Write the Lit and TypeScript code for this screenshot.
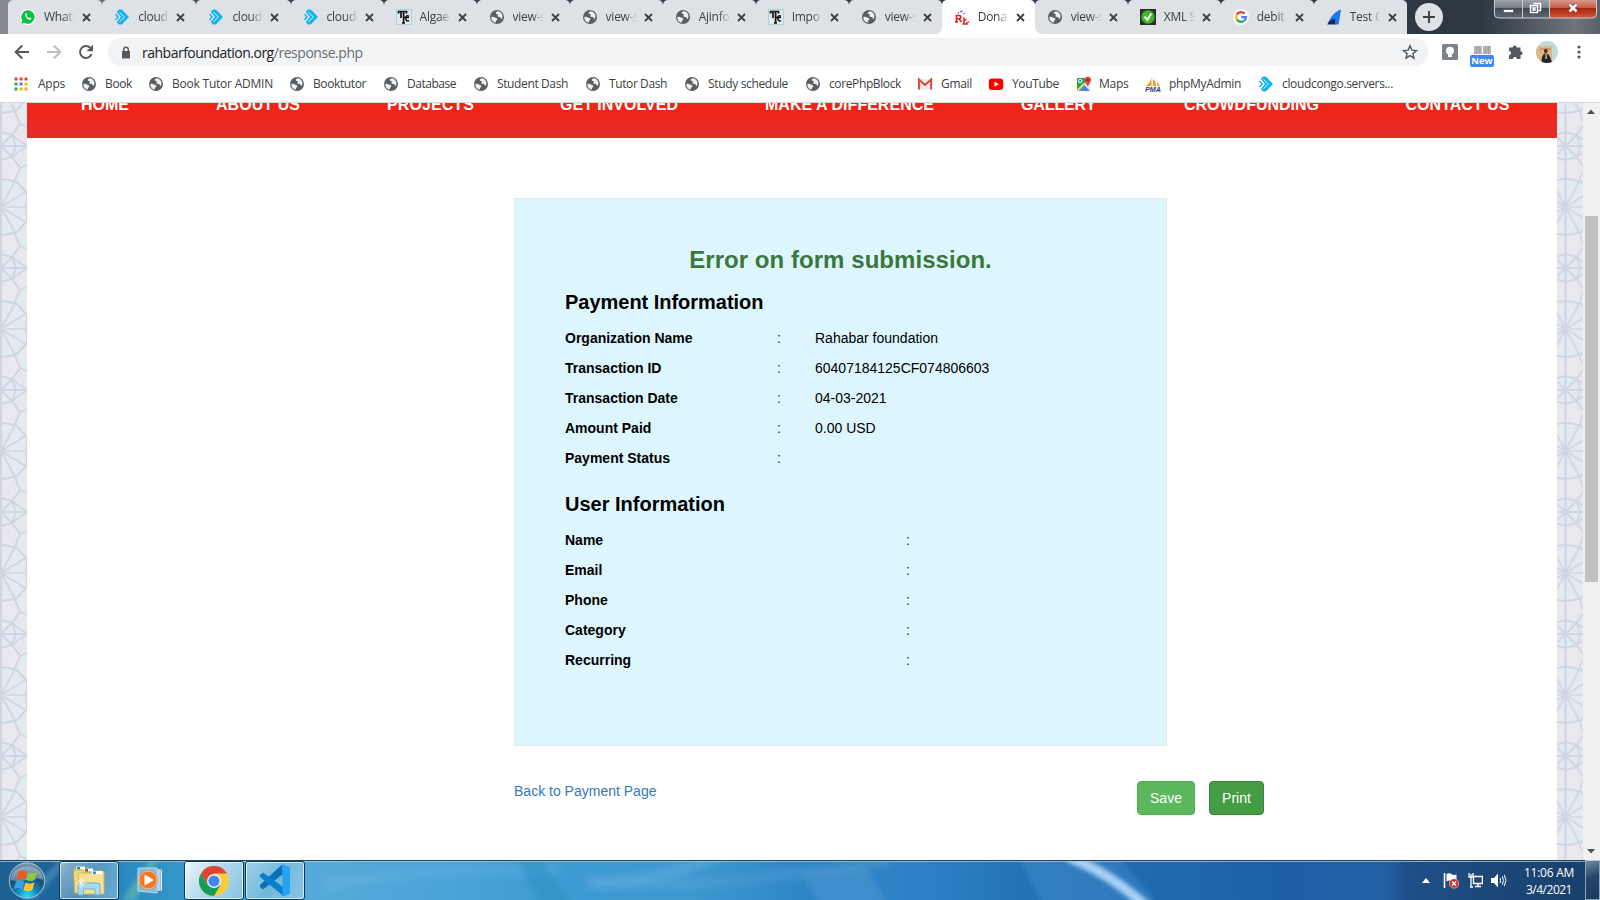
import { LitElement, html, css, svg, nothing } from "lit";
import { customElement, property } from "lit/decorators.js";

/* Text that is tracked so that it fills a given width. */
@customElement("fit-text")
class FitText extends LitElement {
  @property({ type: Number }) width = 0;
  @property() text = "";
  static styles = css`
    :host { display: inline-block; white-space: pre; }
    .t { display: inline-block; white-space: pre; }
  `;
  render() {
    return html`<span class="t">${this.text}</span>`;
  }
  updated() {
    const el = this.renderRoot.querySelector(".t") as HTMLElement;
    el.style.letterSpacing = "0px";
    const natural = el.getBoundingClientRect().width;
    if (this.width && natural) {
      el.style.letterSpacing = `${((this.width - natural) / this.text.length).toFixed(3)}px`;
    }
  }
}

const icons: Record<string, unknown> = {
  globe: svg`<circle cx="8" cy="8" r="7" fill="#5b5f64"/><path d="M2.300 8.200c1.200-.9 2.600-.2 3.500.4.900.6 2.300.3 2.500 1.500.2 1-1.300 1.400-1.500 2.400l-.3 1.300C4.200 13.200 2.300 11 2.300 8.200zM8.500 2.300c-.9.500-2 1-1.700 2 .3.900 1.700.4 2 1.300.2.800-.8 1.300-.3 2 .6.800 2 .1 2.900.8.600.5.500 1.400 1.300 1.500C14.800 6.500 12.500 2.600 8.500 2.300z" fill="#eef0f2"/>`,
  whatsapp: svg`<circle cx="8" cy="8" r="8" fill="#fff"/><path d="M8 1.300a6.700 6.700 0 0 0-5.700 10.200L1.400 14.700l3.200-.9A6.700 6.700 0 1 0 8 1.300z" fill="#0cc143"/><path d="M5.600 4.600c.6-.5 1-.2 1.200.4l.4 1c.1.400-.5.8-.5 1 .5 1 1.200 1.700 2.200 2.100.3 0 .6-.8 1-.7l1.400.7c.4.200 0 1.200-.6 1.500C8.500 11.600 4.200 8 5.600 4.600z" fill="#fff"/>`,
  kite: svg`<path d="M5 .5h2.800L15 8l-7.200 7.500H5L2.800 13 7 8 2.800 3z" fill="#10b5ef"/><path d="M5.500 3.200 10.300 8l-4.800 4.800" fill="none" stroke="#dff6ff" stroke-width="1"/><path d="M2.500 5 5 8 2.500 11 .8 11 3 8 .8 5z" fill="#10b5ef"/>`,
  tc: svg`<rect x=".5" y=".5" width="15" height="15" fill="#e4e8ec" stroke="#a9d3da"/><path d="M2.500 4.500V2.500h8v2M5 3v6M7.600 3v11M6 14h3M8 8.500h5" stroke="#111" stroke-width="1.700" fill="none"/><path d="M13 7.300q-3.200-1.500-3.200 2t3.400 2.300" stroke="#111" stroke-width="1.500" fill="none"/>`,
  rlf: svg`<path d="M4 5c1-3 3-3 4-1M7 1.500l2 1.500M9 5l2-1" stroke="#7a86c8" stroke-width="1.300" fill="none" stroke-dasharray="2 1"/><path d="M2.500 13V6.500h2.500c2.500 0 2.500 3.200 0 3.200H3m2 0 2.500 3.300M1 13h3M10 8.500V15M8.500 15h4.500v-2M10 11h2.500" stroke="#e6211d" stroke-width="1.600" fill="none"/><circle cx="14.500" cy="13" r=".8" fill="#e6211d"/>`,
  check: svg`<rect width="16" height="16" fill="#2b2f2b"/><circle cx="8" cy="8" r="6.700" fill="#44b52a"/><path d="M4.600 7.500 7.300 11l4-6.500" stroke="#fff" stroke-width="2" fill="none"/>`,
  google: svg`<circle cx="8" cy="8" r="8" fill="#fff"/><g fill="none" stroke-width="2.300"><path d="M11.600 4.600A4.900 4.900 0 0 0 3.700 5.800" stroke="#ea4335"/><path d="M3.700 5.800a4.900 4.900 0 0 0 0 4.400" stroke="#fbbc05"/><path d="M3.700 10.200a4.900 4.900 0 0 0 7.500 1.500" stroke="#34a853"/><path d="M11.200 11.700A4.900 4.900 0 0 0 12.900 8.200H8.200" stroke="#4285f4"/></g>`,
  sail: svg`<path d="M15 .5 12.500 15.500H9.500V11C7 10.500 4 12 1.500 15 4.500 8 9 2 15 .5z" fill="#1b76ea"/><path d="M1.200 15.500C3.500 11.500 6.500 9.500 9.500 10.500v5z" fill="#0d2b5c"/>`,
  apps: svg`${[1.500, 6.500, 11.500].map((y, r) => [1.500, 6.500, 11.500].map((x, c) => svg`<rect x=${x} y=${y} width="3" height="3" fill=${[["#ea4335", "#ea4335", "#ea4335"], ["#34a853", "#4285f4", "#fbbc05"], ["#34a853", "#fbaf05", "#fbaf05"]][r][c]}/>`))}`,
  gmail: svg`<path d="M1 3h14v10.500H1z" fill="#ececec"/><path d="M1.900 13.500V3.500L8 8.900l6.100-5.400v10" stroke="#d9483b" stroke-width="2" fill="none"/>`,
  youtube: svg`<rect x=".8" y="2.500" width="14.400" height="11.500" rx="3" fill="#f00"/><path d="M6.500 5.600v5.200L10.700 8.200z" fill="#fff"/>`,
  maps: svg`<path d="M1 2h13v13H1z" fill="#1fa463"/><path d="M1 15 14 2v13z" fill="#e8e8e6"/><path d="M1.500 15 7.800 8.500 14 15z" fill="#4a86f0"/><path d="m1 13.500 7-7L9.500 8 2.500 15H1z" fill="#fcd24a"/><circle cx="4.200" cy="5" r="1.700" fill="none" stroke="#fff"/><path d="M11.700 11C11.500 8.500 8.600 7 8.600 4a3.200 3.200 0 0 1 6.400 0c0 3-2.900 4.500-3.300 7z" fill="#e3423a"/><circle cx="11.800" cy="4" r="1.100" fill="#7c1a14"/>`,
  pma: svg`<path d="M6.500 1v9H.8C4 7.500 6 5 6.500 1zM8 3v7h3C11 6.500 10 4.500 8 3zM11.500 1c0 4 1.500 7 4 9h-3z" fill="#f29c2e"/><text x="0" y="15.800" font-size="7" font-weight="bold" font-style="italic" font-family="Liberation Sans" fill="#3b3b6d" textLength="16" lengthAdjust="spacingAndGlyphs">PMA</text>`,
};
const icon = (name: string) => html`<svg class="ico" viewBox="0 0 16 16">${icons[name]}</svg>`;

const tabs: [string, string][] = [
  ["whatsapp", "Whats"], ["kite", "cloudc"], ["kite", "cloudc"], ["kite", "cloudc"], ["tc", "Algae"],
  ["globe", "view-s"], ["globe", "view-s"], ["globe", "Ajinfo"], ["tc", "Impo"], ["globe", "view-s"],
  ["rlf", "Donat"], ["globe", "view-s"], ["check", "XML S"], ["google", "debit"], ["sail", "Test C"],
];

/* icon, label, left edge of the icon, left edge of the label, label width */
const marks: [string, string, number, number, number][] = [
  ["apps", "Apps", 13, 38, 27], ["globe", "Book", 81, 105, 27], ["globe", "Book Tutor ADMIN", 148, 172, 101],
  ["globe", "Booktutor", 289, 313, 53], ["globe", "Database", 383, 407, 49], ["globe", "Student Dash", 473, 497, 71],
  ["globe", "Tutor Dash", 585, 609, 58], ["globe", "Study schedule", 684, 708, 80], ["globe", "corePhpBlock", 805, 829, 72],
  ["gmail", "Gmail", 917, 941, 31], ["youtube", "YouTube", 988, 1012, 47], ["maps", "Maps", 1076, 1099, 29.500],
  ["pma", "phpMyAdmin", 1145, 1169, 72], ["kite", "cloudcongo.servers...", 1258, 1282, 111],
];

const nav: [string, number, number][] = [
  ["HOME", 81, 48], ["ABOUT US", 216, 84], ["PROJECTS", 387, 87], ["GET INVOLVED", 560, 118],
  ["MAKE A DIFFERENCE", 765, 169], ["GALLERY", 1021, 75], ["CROWDFUNDING", 1184, 135], ["CONTACT US", 1405.500, 104],
];

const payment: [string, string][] = [
  ["Organization Name", "Rahabar foundation"], ["Transaction ID", "60407184125CF074806603"],
  ["Transaction Date", "04-03-2021"], ["Amount Paid", "0.00 USD"], ["Payment Status", ""],
];
const user = ["Name", "Email", "Phone", "Category", "Recurring"];

const quarter = svg`
  <path d="M0 14 11 11 19 22 14 34 0 32z" fill="#e9e9ef"/>
  <path d="M19 22 28 19V6L20 4 11 11z" fill="#e7e7ee"/>
  <g fill="#d2e6e4"><rect x="3" y="17" width="1" height="1"/><rect x="7" y="19" width="1" height="1"/><rect x="11" y="17" width="1" height="1"/><rect x="4" y="23" width="1" height="1"/><rect x="9" y="24" width="1" height="1"/><rect x="14" y="22" width="1" height="1"/><rect x="6" y="28" width="1" height="1"/><rect x="12" y="29" width="1" height="1"/><rect x="19" y="9" width="1" height="1"/><rect x="23" y="12" width="1" height="1"/><rect x="20" y="16" width="1" height="1"/><rect x="21" y="33" width="1" height="1"/><rect x="24" y="28" width="1" height="1"/></g>
  <g fill="#f1dde1"><rect x="5" y="20" width="1" height="1"/><rect x="10" y="21" width="1" height="1"/><rect x="2" y="27" width="1" height="1"/><rect x="9" y="28" width="1" height="1"/><rect x="14" y="26" width="1" height="1"/><rect x="17" y="12" width="1" height="1"/><rect x="22" y="15" width="1" height="1"/><rect x="24" y="9" width="1" height="1"/><rect x="20" y="28" width="1" height="1"/></g>
  <path d="M0 14 11 11 19 22 14 34M11 11 15 0M0 0 11 11M11 11 20 4 28 0M19 22 28 18M14 34 28 49M0 61 14 35M0 61 26 45" fill="none" stroke="#d1d5e2" stroke-width="1.900"/>
  <path d="M0 33Q8 33 15 36 M26 45Q26 53 25 61" fill="none" stroke="#d1d5e2" stroke-width="2"/>
  <path d="M0 0H28" stroke="#d1d5e2" stroke-width="2"/>
  <path d="M0 61H28" stroke="#d9d6e4" stroke-width="1.600"/>
`;
const strip = (id: string, axis: number) => html`
  <svg class="strip" width="100%" height="757">
    <defs><pattern id=${id} width="56" height="122" patternUnits="userSpaceOnUse" x=${axis - 28} y="-18">
      <rect width="56" height="122" fill="#e2ecf0"/>
      ${["translate(28 61)", "translate(28 61) scale(-1 1)", "translate(28 61) scale(1 -1)", "translate(28 61) scale(-1 -1)"].map(
        (t) => svg`<g transform=${t}>${quarter}</g>`)}
      <path d="M28 0V122" stroke="#d1d5e2" stroke-width="2.200"/>
    </pattern></defs>
    <rect width="100%" height="757" fill=${`url(#${id})`}/>
  </svg>`;

@customElement("app-root")
class AppRoot extends LitElement {
  static styles = css`
    * { box-sizing: border-box; }
    :host { display: flex; flex-direction: column; width: 1600px; height: 900px; overflow: hidden; background: #fff; font-family: "Open Sans", "Noto Sans", sans-serif; color: #3c4043; }
    svg { display: block; flex: none; }
    .ico { width: 16px; height: 16px; }
    .tabstrip { flex: none; height: 34px; display: flex; padding-left: 8px; background: linear-gradient(90deg, #848b91 0, #69717a 100px, #394450 250px, #2e3944 1400px, #2c3742 1480px, #6f757b 1575px, #5a6067 1600px); }
    .tab { flex: none; width: 93.030px; height: 34px; background: #dee1e6; border-radius: 5px 5px 0 0; display: flex; align-items: center; padding-left: 12px; position: relative; z-index: 1; }
    .tab.wide { width: 94.200px; }
    .tab.sep::after { content: ""; position: absolute; right: -1px; top: 8px; width: 1px; height: 19px; background: #85888d; z-index: 2; }
    .tab.on { background: #fff; z-index: 0; }
    .tab.on::before { content: ""; position: absolute; left: -8px; right: -8px; bottom: 0; height: 8px; background: #fff; }
    .tab.on > * { position: relative; }
    .tab.before { border-bottom-right-radius: 7px; }
    .tab.after { border-bottom-left-radius: 7px; }
    .label { margin-left: 8px; width: 31px; overflow: hidden; white-space: nowrap; font-size: 12px; letter-spacing: -.25px; line-height: 20px; -webkit-mask-image: linear-gradient(90deg, #000 62%, transparent); mask-image: linear-gradient(90deg, #000 62%, transparent); }
    .x { margin-left: 7px; width: 9px; height: 9px; }
    .plus { margin: 3px 0 0 8px; width: 28px; height: 28px; }
    .win { margin-left: 51px; width: 103px; height: 19px; }
    .toolbar { flex: none; height: 36px; display: flex; align-items: center; }
    .arrow { width: 16px; height: 16px; margin-left: 14px; }
    .arrow + .arrow { margin-left: 16px; }
    .omni { margin-left: 14px; width: 1320px; height: 28px; border-radius: 14px; background: #f1f3f4; display: flex; align-items: center; padding: 0 10px 0 13px; font-size: 14px; color: #202124; }
    .host { margin-left: 11px; }
    .path { flex: 1; color: #6a6e73; }
    .tool { margin-left: 14px; width: 16px; height: 16px; }
    .face { margin-left: 12px; width: 22px; height: 22px; }
    .dots { margin-left: 19px; width: 4px; height: 14px; }
    .new { margin-left: 12px; display: flex; flex-direction: column; align-items: center; gap: 1px; width: 24px; padding-top: 9px; }
    .badge { width: 24px; height: 12px; border-radius: 2px; background: #4285f4; color: #fff; font-weight: 700; font-size: 9.500px; line-height: 12px; text-align: center; }
    .marks { flex: none; height: 33px; display: flex; align-items: center; padding: 0 0 4px 13px; border-bottom: 1px solid #d5d8dc; font-size: 12px; }
    .mark { flex: none; display: flex; align-items: center; }
    .mark fit-text { line-height: 18px; }
    .page { flex: none; height: 757px; display: grid; grid-template-columns: 27px 1530px 26px 17px; overflow: hidden; font-family: "Liberation Sans", Arial, sans-serif; }
    .content { display: flex; flex-direction: column; overflow: hidden; }
    .nav { flex: none; height: 35px; display: flex; padding-left: 54px; background: linear-gradient(#f02419 20%, #e62b2a 90%); color: #fff; font-weight: 700; font-size: 16px; }
    .nav div { flex: none; margin-top: -7px; line-height: 18px; height: 18px; }
    .card { flex: none; margin: 60px 0 0 487px; width: 653px; height: 548px; border: 1px solid #e6e9ea; background: #ddf6fe; padding: 47px 50px 0 50px; color: #000; }
    .title { margin: 0; text-align: center; font-size: 24px; line-height: 28px; color: #3c763d; letter-spacing: .05px; }
    .h { margin: 16px 0 0 0; font-size: 20px; line-height: 24px; font-weight: 700; }
    .rows { margin-top: 9px; display: grid; grid-auto-rows: 30px; align-items: center; font-size: 14px; }
    .pay { grid-template-columns: 212px 38px 1fr; }
    .usr { grid-template-columns: 341px 1fr; }
    .h.second { margin-top: 19px; }
    .rows i { font-style: normal; color: #333; }
    .actions { display: flex; align-items: flex-start; margin: 35px 0 0 487px; font-size: 14px; }
    .link { width: 623px; color: #337ab7; line-height: 20px; }
    .btn { height: 34px; border: 1px solid #4cae4c; background: #5cb85c; border-radius: 4px; color: #fff; display: flex; align-items: center; justify-content: center; width: 58px; }
    .btn.dark { margin-left: 14px; width: 55px; background: #449d44; border-color: #398439; }
    .scroll { background: #f1f1f1; display: flex; flex-direction: column; align-items: center; padding: 6px 1px 6px 0; }
    .thumb { width: 13px; height: 366px; background: #c1c1c1; margin: 102px 0 auto; }
    .taskbar { flex: none; height: 40px; display: grid; }
    .sky, .bar { grid-area: 1 / 1; }
    .bar { display: flex; align-items: flex-start; z-index: 1; }
    .orb { margin: 2px 0 0 8px; width: 38px; height: 38px; }
    .app { flex: none; height: 39px; width: 60px; margin-top: 1px; border: 1px solid #123a58; border-radius: 3px; box-shadow: inset 0 0 0 1px rgba(255,255,255,.65); background: linear-gradient(125deg, rgba(255,255,255,.5), rgba(255,255,255,.22) 50%, rgba(255,255,255,.32)); display: flex; align-items: center; justify-content: center; }
    .app.a1 { margin-left: 13px; }
    .app.lit { background: linear-gradient(125deg, rgba(255,255,255,.92), rgba(215,235,246,.75) 50%, rgba(170,215,235,.65)); margin-left: 17px; }
    .app.last { margin-left: 1px; }
    .wmp { margin: 7px 0 0 17.500px; }
    .tray { margin: 0 10px 0 auto; display: flex; align-items: center; height: 40px; }
    .clock { width: 52px; margin-left: 16px; display: flex; flex-direction: column; align-items: center; color: #fff; font-size: 12px; line-height: 17px; padding-top: 1px; }
    .t13 { margin-left: 13px; }
    .t8 { margin-left: 8px; }
    .desk { width: 15px; height: 40px; border: 1px solid #8ba6bd; border-top-color: #b9cbda; background: linear-gradient(160deg, #6f8ba3, #24446a 45%, #1b3a63); }
  `;

  private tabStrip() {
    return html`<div class="tabstrip">
      ${tabs.map(([ic, text], i) => html`<div class="tab ${i < 3 ? "wide" : ""} ${i === 10 ? "on" : ""} ${i === 9 ? "before" : ""} ${i === 11 ? "after" : ""} ${i !== 9 && i !== 10 && i !== 14 ? "sep" : ""}">
        ${icon(ic)}<div class="label">${text}</div>
        <svg class="x" viewBox="0 0 9 9"><path d="M1 1 8 8M8 1 1 8" stroke="#3c4043" stroke-width="1.800"/></svg>
      </div>`)}
      <svg class="plus" viewBox="0 0 28 28"><circle cx="14" cy="14" r="14" fill="#dee1e6"/><path d="M14 8v12M8 14h12" stroke="#3c4043" stroke-width="1.900"/></svg>
      <svg class="win" viewBox="0 0 103 19">
        <defs>
          <linearGradient id="wr" x2="0" y2="1"><stop offset="0" stop-color="#dba08f"/><stop offset=".45" stop-color="#c4614c"/><stop offset=".5" stop-color="#a82511"/><stop offset="1" stop-color="#d2593a"/></linearGradient>
          <linearGradient id="wg" x2="0" y2="1"><stop offset="0" stop-color="#a2a8ae"/><stop offset=".45" stop-color="#767e86"/><stop offset=".5" stop-color="#3f4a55"/><stop offset="1" stop-color="#5d6872"/></linearGradient>
        </defs>
        <path d="M.5-1V14q0 4 4 4H98q4 0 4-4V-1z" fill="url(#wg)"/>
        <path d="M55-1V18H98q4 0 4-4V-1z" fill="url(#wr)"/>
        <path d="M.5-1V14q0 4 4 4H98.500q4 0 4-4V-1M28.500 0V18M55.500 0V18" fill="none" stroke="#c9ced3"/>
        <rect x="9.500" y="9.500" width="10" height="3" fill="#fff" stroke="#596068" stroke-width=".8"/>
        <path d="M39.500 3.500h7v7h-2M36.500 5.500h7v7h-7zM39 8h2v2h-2z" fill="none" stroke="#fff" stroke-width="1.500"/>
        <path d="m75.500 4.500 7 7M82.500 4.500l-7 7" stroke="#6b3030" stroke-width="4"/><path d="m75.500 4.500 7 7M82.500 4.500l-7 7" stroke="#fff" stroke-width="2.600"/>
      </svg>
    </div>`;
  }

  private toolbar() {
    return html`<div class="toolbar">
      <svg class="arrow" viewBox="0 0 16 16"><path d="M15 8H2M8.200 1.500 1.700 8l6.500 6.500" fill="none" stroke="#55595e" stroke-width="2"/></svg>
      <svg class="arrow" viewBox="0 0 16 16"><path d="M1 8h13M7.800 1.500 14.300 8l-6.500 6.500" fill="none" stroke="#bcbec1" stroke-width="2"/></svg>
      <svg class="arrow" viewBox="0 0 16 16"><path d="M13.600 10.200A6 6 0 1 1 12.600 4" fill="none" stroke="#55595e" stroke-width="2"/><path d="M15 .8v6.400H8.600z" fill="#55595e"/></svg>
      <div class="omni">
        <svg width="10" height="13" viewBox="0 0 10 13"><path d="M1 5h8v7.500H1z" fill="#55595e"/><path d="M2.700 5.500V3.500a2.300 2.300 0 0 1 4.600 0v2" fill="none" stroke="#55595e" stroke-width="1.400"/></svg>
        <fit-text class="host" .width=${131.700} .text=${"rahbarfoundation.org"}></fit-text>
        <fit-text class="path" .width=${89} .text=${"/response.php"}></fit-text>
        <svg width="16" height="16" viewBox="0 0 16 16"><path d="m8 1.800 1.800 4.300 4.700.4-3.600 3.100 1.100 4.600L8 11.700l-4 2.500 1.100-4.600L1.500 6.500l4.700-.4z" fill="none" stroke="#55595e" stroke-width="1.400"/></svg>
      </div>
      <svg class="tool" viewBox="0 0 16 16"><rect width="16" height="16" rx="1.500" fill="#7d8288"/><circle cx="8" cy="6.700" r="4" fill="#fff"/><path d="M6 10h4v3H6z" fill="#fff"/></svg>
      <div class="new">
        <svg width="17" height="8" viewBox="0 0 17 8"><path d="M0 0h8v8H0zM9 0h8v8H9z" fill="#b5b5b5"/><path d="M2.500 0v8M5.500 0v8M11.500 0v8M14.500 0v8" stroke="#9b9b9b" stroke-width=".8"/></svg>
        <div class="badge">New</div>
      </div>
      <svg class="tool" viewBox="0 0 16 16"><path d="M1 3.500h3.700a2 2 0 1 1 4 0H12.500v3.700a2 2 0 1 1 0 4V15H9a2.100 2.100 0 0 0-4.200 0H1V11.200a2.100 2.100 0 0 0 0-4.200z" fill="#55595e"/></svg>
      <svg class="face" viewBox="0 0 22 22"><defs><clipPath id="av"><circle cx="11" cy="11" r="11"/></clipPath></defs><g clip-path="url(#av)"><path d="M0 0h22v22H0z" fill="#b8dce0"/><path d="M0 8 3 5h13v17H0z" fill="#dfb983"/><path d="M4 7h11v2H4z" fill="#c99a66"/><circle cx="9.800" cy="10" r="1.900" fill="#4a2d22"/><path d="M5.500 22c0-7 1.500-9.500 4.300-9.500s4.700 3 6.200 9.500z" fill="#26262b"/><path d="M9.500 13h1.200v5H9.500z" fill="#ddd"/><path d="M16 17h6v5h-6z" fill="#c9dfd0"/></g></svg>
      <svg class="dots" viewBox="0 0 4 14"><g fill="#55595e"><circle cx="2" cy="2" r="1.600"/><circle cx="2" cy="7" r="1.600"/><circle cx="2" cy="12" r="1.600"/></g></svg>
    </div>`;
  }

  private sky() {
    return html`<svg class="sky" width="1600" height="40" viewBox="0 0 1600 40" preserveAspectRatio="none">
      <defs>
        <linearGradient id="sk"><stop offset="0" stop-color="#1d5f92"/><stop offset=".035" stop-color="#1c659b"/><stop offset=".08" stop-color="#2a8bc0"/><stop offset=".14" stop-color="#3d9fcf"/><stop offset=".2" stop-color="#55aad9"/><stop offset=".28" stop-color="#4aa3d8"/><stop offset=".35" stop-color="#3d9ad2"/><stop offset=".43" stop-color="#3f98d0"/><stop offset=".5" stop-color="#2f86c6"/><stop offset=".58" stop-color="#2d80c6"/><stop offset=".64" stop-color="#2273b5"/><stop offset=".7" stop-color="#1f6bb2"/><stop offset=".8" stop-color="#1d60a9"/><stop offset=".865" stop-color="#2262a4"/><stop offset=".88" stop-color="#1c4f88"/><stop offset=".93" stop-color="#1c4877"/><stop offset="1" stop-color="#173f6c"/></linearGradient>
        <filter id="b" x="-20%" y="-80%" width="140%" height="260%"><feGaussianBlur stdDeviation="4"/></filter>
        <filter id="b2" x="-20%" y="-20%" width="140%" height="140%"><feGaussianBlur stdDeviation="2"/></filter>
      </defs>
      <rect width="1600" height="40" fill="url(#sk)"/>
      <path d="M325 25Q420 8 560 10" stroke="#7cc2e6" stroke-width="8" fill="none" opacity=".3" filter="url(#b)"/>
      <path d="M122 40 150 0h8L136 40z" fill="#8fd4a8" opacity=".4" filter="url(#b2)"/>
      <path d="M20 40 60 0h8L36 40z" fill="#8bbfe0" opacity=".3" filter="url(#b2)"/>
      <path d="M515-4h24l32 48h-30z" fill="#2388b8" opacity=".35" filter="url(#b2)"/>
      <path d="M590 24Q650 24 720-4" stroke="#7cc0e8" stroke-width="8" fill="none" opacity=".4" filter="url(#b)"/>
      <path d="M585 20Q680 28 760 18T890 2" stroke="#6fb4e0" stroke-width="6" fill="none" opacity=".4" filter="url(#b)"/>
      <path d="M800 12 865 5 888 44h-68z" fill="#559ad2" opacity=".45" filter="url(#b2)"/>
      <path d="M1018-4h100l40 48H1042z" fill="#4a92d2" opacity=".4" filter="url(#b2)"/>
      <path d="M1068-3Q1108 12 1146 46" stroke="#b5d9fa" stroke-width="10" fill="none" opacity=".9" filter="url(#b2)"/>
      <path d="M0 .5H1600" stroke="#23405a"/><path d="M0 1.500H1600" stroke="#a8cde4" opacity=".75"/>
    </svg>`;
  }

  private taskbar() {
    return html`<div class="taskbar">
      ${this.sky()}
      <div class="bar">
        <svg class="orb" viewBox="0 0 38 38">
          <defs><radialGradient id="ob" cx=".5" cy=".95" r=".95"><stop offset="0" stop-color="#28e2ff"/><stop offset=".3" stop-color="#128dc0"/><stop offset=".6" stop-color="#144d75"/><stop offset="1" stop-color="#869fb3"/></radialGradient></defs>
          <circle cx="19" cy="18.500" r="17.700" fill="url(#ob)" stroke="#a9c7da"/>
          <path d="M3 18C3 0 35 0 35 18 24 13 14 22 3 18z" fill="#fff" opacity=".32"/>
          <path d="M10.500 9.500q4-2.200 8.300.2l-2 8q-4-2-8.300 0z" fill="#ee5a24"/>
          <path d="M20 10.500q4 2.200 9.200-.6l-2.300 8q-4.500 2.400-9-.2z" fill="#8fc540"/>
          <path d="M8 19.500q4-2 8.200.2l-2 7.600q-4-2.200-8.300-.3z" fill="#3f9fe0"/>
          <path d="M17.500 20.500q4.500 2.300 9 .1l-2.200 7.600q-4.500 2.200-8.800-.3z" fill="#fcc729"/>
        </svg>
        <div class="app a1"><svg width="34" height="32" viewBox="0 0 34 32">
          <path d="M2 4h11l1 3h12v5H2z" fill="#e9cf6d"/><path d="M4 1.500h9V5H4z" fill="#fff"/><path d="M5 2h3v2.500H5z" fill="#1aa53a"/>
          <path d="M1.500 5h10l1.500 3h14L28 28H2.500z" fill="#f1da83" stroke="#c9a94a"/><path d="M12 3.500h9v3h-9z" fill="#fff"/><path d="M13 4h3v2.500h-3z" fill="#c7401c"/>
          <path d="M6 8h13l1.500-2h10l1.500 1v22H7z" fill="#f5e298" stroke="#d2b65e"/><path d="M20 6h10v3H20z" fill="#fff"/><path d="M21 6.500h3V9h-3z" fill="#2a8fe0"/>
          <path d="M6 30V20.500Q6 18 9 18h16q3 0 3 2.500V30h-5v-6H11.500v6z" fill="#a8dbee" stroke="#6db1cf"/><path d="M9 13v10M4 18h10M6 15l6 6M12 15l-6 6" stroke="#fff" stroke-width=".8"/>
        </svg></div>
        <svg class="wmp" width="30" height="27" viewBox="0 0 30 27">
          <path d="M20 2h5v22h-5z" fill="#8fc1dc"/><path d="M22 3v21M24.500 4v19" stroke="#e0f0f8"/><path d="M1 1h19v25L1 24z" fill="#86bcda" stroke="#b9dcec"/><circle cx="11" cy="13" r="9.500" fill="#f4741f"/><circle cx="11" cy="13" r="8.800" fill="none" stroke="#fbb98b"/><path d="M7.500 7.500v11L17 13z" fill="#fff"/>
        </svg>
        <div class="app lit"><svg width="30" height="30" viewBox="0 0 30 30">
          <circle cx="15" cy="15" r="15" fill="#fbcc3c"/>
          <path d="M2 7.500A15 15 0 0 1 28 7.500H15L8.500 18.700z" fill="#db4437"/><path d="M2 7.500A15 15 0 0 0 15 30l6.500-11.300H8.500z" fill="#159e58"/>
          <circle cx="15" cy="15" r="7" fill="#f3f6f8"/><circle cx="15" cy="15" r="5.600" fill="#4586f3"/>
        </svg></div>
        <div class="app last"><svg width="32" height="33" viewBox="0 0 32 33">
          <path d="M23 1 24 10 4 25.500 1 23V21L22 1.500z" fill="#0a6fb8"/><path d="M1 11 4 8.500 24 23V31.500L1 13z" fill="#0a7fcd"/><path d="M22 1 24 .5 31 3.500V29.500L24 32.500 22 32 23.500 30V3z" fill="#23a3f2"/>
        </svg></div>
        <div class="tray">
          <svg width="8" height="5" viewBox="0 0 8 5"><path d="M0 5 4 0l4 5z" fill="#fff"/></svg>
          <svg class="t13" width="17" height="17" viewBox="0 0 17 17"><path d="M1.500 1v15" stroke="#fff" stroke-width="1.600"/><path d="M3.500 2q3-1.500 5 0t5 .5v7q-3 1-5-.3t-5 .3z" fill="#fff"/><circle cx="11" cy="11.500" r="4.700" fill="#d92c20" stroke="#fbd6d2" stroke-width=".6"/><path d="m9 9.500 4 4M13 9.500l-4 4" stroke="#fff" stroke-width="1.500"/></svg>
          <svg class="t8" width="15" height="15" viewBox="0 0 15 15"><path d="M5.500 3.500h9v7h-9zM7 13.500h6M10 10.500v3" fill="none" stroke="#fff" stroke-width="1.400"/><path d="M1 0v4h4V0M3 1v13M2 14h3" fill="none" stroke="#fff" stroke-width="1.300"/></svg>
          <svg class="t8" width="16" height="15" viewBox="0 0 16 15"><path d="M0 5h3l4-4.500v14L3 10H0z" fill="#fff"/><path d="M9 5q1.300 2.500 0 5M11.300 3.300q2.400 4.200 0 8.400M13.400 2q3 5.500 0 11" fill="none" stroke="#fff"/></svg>
          <div class="clock"><fit-text .width=${50} .text=${"11:06 AM"}></fit-text><fit-text .width=${46} .text=${"3/4/2021"}></fit-text></div>
        </div>
        <div class="desk"></div>
      </div>
    </div>`;
  }

  render() {
    return html`
      ${this.tabStrip()}
      ${this.toolbar()}
      <div class="marks">
        ${marks.map(([ic, text, x, tx, w], i) => html`<div class="mark" style="width:${(marks[i + 1]?.[2] ?? 1500) - x}px">
          ${icon(ic)}<fit-text style="margin-left:${tx - x - 16}px" .width=${w} .text=${text}></fit-text></div>`)}
      </div>
      <div class="page">
        ${strip("pl", 1)}
        <div class="content">
          <div class="nav">${nav.map(([text, x, w], i) => html`<div style="width:${(nav[i + 1]?.[1] ?? 1557) - x}px"><fit-text .width=${w} .text=${text}></fit-text></div>`)}</div>
          <div class="card">
            <h1 class="title">Error on form submission.</h1>
            <h2 class="h"><fit-text .width=${198.500} .text=${"Payment Information"}></fit-text></h2>
            <div class="rows pay">${payment.map(([k, v]) => html`<b>${k}</b><i>:</i><span>${v || nothing}</span>`)}</div>
            <h2 class="h second"><fit-text .width=${160} .text=${"User Information"}></fit-text></h2>
            <div class="rows usr">${user.map((k) => html`<b>${k}</b><i>:</i>`)}</div>
          </div>
          <div class="actions"><a class="link"><fit-text .width=${142.500} .text=${"Back to Payment Page"}></fit-text></a><div class="btn">Save</div><div class="btn dark">Print</div></div>
        </div>
        ${strip("pr", 8.500)}
        <div class="scroll">
          <svg width="8" height="5" viewBox="0 0 8 5"><path d="M0 5 4 .5 8 5z" fill="#505050"/></svg>
          <div class="thumb"></div>
          <svg width="8" height="5" viewBox="0 0 8 5"><path d="M0 0 4 4.500 8 0z" fill="#505050"/></svg>
        </div>
      </div>
      ${this.taskbar()}
    `;
  }
}
